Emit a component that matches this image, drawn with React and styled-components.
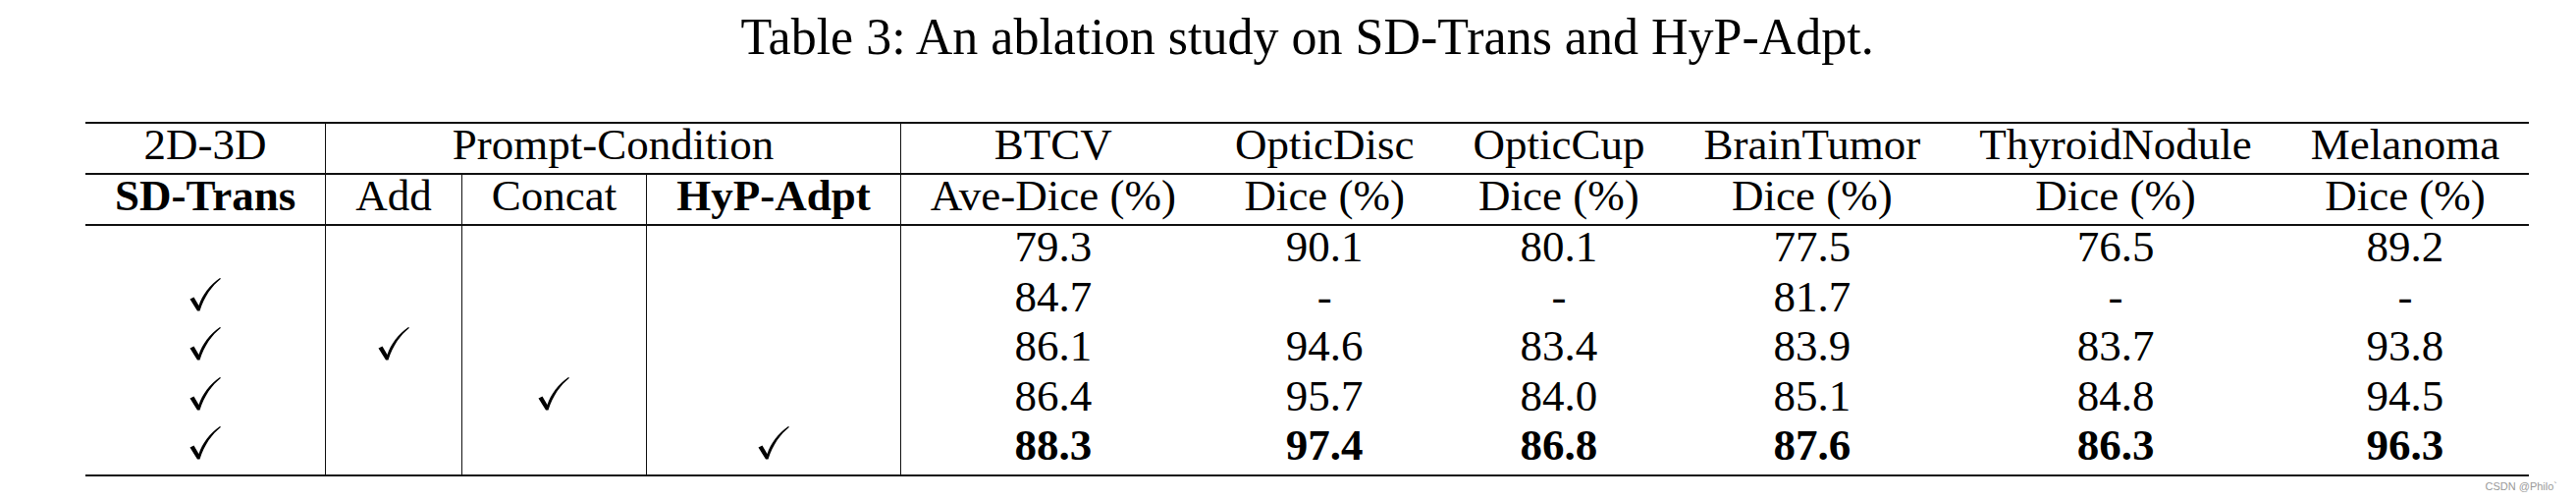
import React from "react";
import styled, { createGlobalStyle } from "styled-components";

const GlobalStyle = createGlobalStyle`
  html, body {
    margin: 0;
    padding: 0;
    background: #ffffff;
  }

  body {
    width: 2624px;
    height: 510px;
    overflow: hidden;
    position: relative;
    font-family: "Liberation Serif", "Times New Roman", serif;
    color: #000;
  }
`;

const Page = styled.main`
  padding: 11.5px 0 0 87px;
`;

const Figure = styled.figure`
  margin: 0;
  display: inline-block;
`;

const Caption = styled.figcaption`
  font-size: 52px;
  line-height: 52px;
  text-align: center;
  margin-bottom: 60.5px;
`;

const Table = styled.table`
  border-collapse: collapse;
  border-top: 2px solid #111;
  border-bottom: 2px solid #111;
  font-size: 45px;
`;

const HeadRow = styled.tr`
  border-bottom: 2px solid #111;
`;

const Cell = styled.td`
  padding: 0 30px ${(p) => (p.$head ? "8px" : "8.6px")};
  line-height: 42px;
  text-align: center;
  vertical-align: top;
  white-space: nowrap;
  font-weight: ${(p) => (p.$bold ? 700 : 400)};
  border-right: ${(p) => (p.$rule ? "1.5px solid #111" : "none")};
`;

const Tick = styled.svg`
  display: inline-block;
  vertical-align: baseline;
  width: 32px;
  height: 34px;
`;

const Watermark = styled.div`
  position: absolute;
  right: 19px;
  top: 489px;
  font-family: "Liberation Sans", Arial, sans-serif;
  font-size: 11px;
  line-height: 12px;
  color: #999;
`;

function Check() {
  return (
    <Tick viewBox="0 0 32 34" aria-label="yes">
      <path
        d="M0.5 21.5 L4.5 19.5 L9.5 28 C13 17 21 7 31 0 L32 0.8 C23 8 15 19 10.5 33.5 L8 33.5 Z"
        fill="#000"
      />
    </Tick>
  );
}

const datasets = [
  { name: "BTCV", metric: "Ave-Dice (%)" },
  { name: "OpticDisc", metric: "Dice (%)" },
  { name: "OpticCup", metric: "Dice (%)" },
  { name: "BrainTumor", metric: "Dice (%)" },
  { name: "ThyroidNodule", metric: "Dice (%)" },
  { name: "Melanoma", metric: "Dice (%)" },
];

const rows = [
  { flags: [false, false, false, false], scores: ["79.3", "90.1", "80.1", "77.5", "76.5", "89.2"] },
  { flags: [true, false, false, false], scores: ["84.7", "-", "-", "81.7", "-", "-"] },
  { flags: [true, true, false, false], scores: ["86.1", "94.6", "83.4", "83.9", "83.7", "93.8"] },
  { flags: [true, false, true, false], scores: ["86.4", "95.7", "84.0", "85.1", "84.8", "94.5"] },
  { flags: [true, false, false, true], scores: ["88.3", "97.4", "86.8", "87.6", "86.3", "96.3"], best: true },
];

function App() {
  return (
    <Page>
      <GlobalStyle />
      <Figure>
        <Caption>Table 3: An ablation study on SD-Trans and HyP-Adpt.</Caption>
        <Table>
          <thead>
            <HeadRow>
              <Cell $head $rule>2D-3D</Cell>
              <Cell $head $rule colSpan={3}>Prompt-Condition</Cell>
              {datasets.map((d) => (
                <Cell $head key={d.name}>{d.name}</Cell>
              ))}
            </HeadRow>
            <HeadRow>
              <Cell $head $rule $bold>SD-Trans</Cell>
              <Cell $head $rule>Add</Cell>
              <Cell $head $rule>Concat</Cell>
              <Cell $head $rule $bold>HyP-Adpt</Cell>
              {datasets.map((d) => (
                <Cell $head key={d.name}>{d.metric}</Cell>
              ))}
            </HeadRow>
          </thead>
          <tbody>
            {rows.map((r, i) => (
              <tr key={i}>
                {r.flags.map((f, j) => (
                  <Cell $rule key={j}>{f ? <Check /> : null}</Cell>
                ))}
                {r.scores.map((s, j) => (
                  <Cell $bold={r.best} key={j}>{s}</Cell>
                ))}
              </tr>
            ))}
          </tbody>
        </Table>
      </Figure>
      <Watermark>CSDN @Philo`</Watermark>
    </Page>
  );
}

export default App;
